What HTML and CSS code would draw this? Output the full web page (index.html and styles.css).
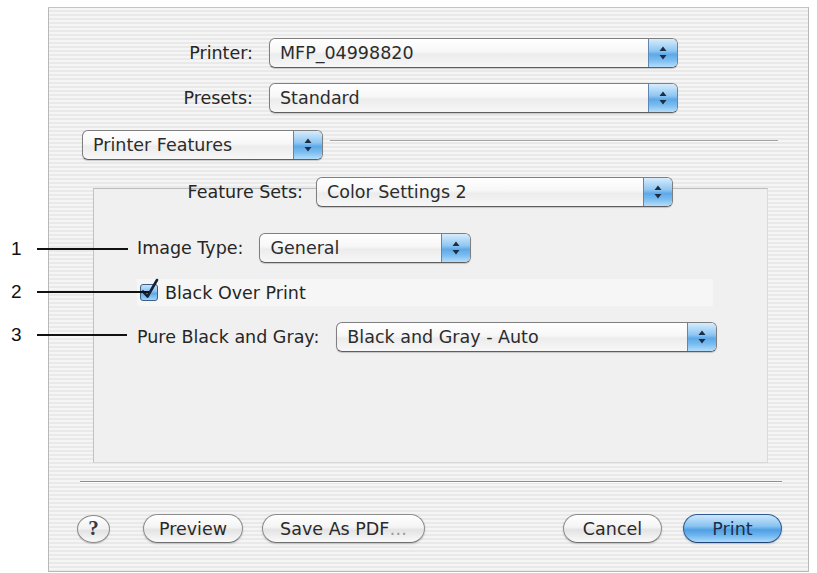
FILE: index.html
```html
<!DOCTYPE html>
<html>
<head>
<meta charset="utf-8">
<link rel="stylesheet" href="styles.css">
</head>
<body>
<div class="page">
  <div class="window">
    <div class="field-row top-row">
      <span class="label">Printer:</span>
      <div class="popup popup-printer"><span class="popup-text">MFP_04998820</span><span class="arrows"><svg width="10" height="16" viewBox="0 0 10 16"><path d="M5 1.5 L8.5 6 L1.5 6 Z M5 14.5 L8.5 10 L1.5 10 Z" fill="#1d2d44"/></svg></span></div>
    </div>
    <div class="field-row top-row second">
      <span class="label">Presets:</span>
      <div class="popup popup-printer"><span class="popup-text">Standard</span><span class="arrows"><svg width="10" height="16" viewBox="0 0 10 16"><path d="M5 1.5 L8.5 6 L1.5 6 Z M5 14.5 L8.5 10 L1.5 10 Z" fill="#1d2d44"/></svg></span></div>
    </div>
    <div class="pane-row">
      <div class="popup popup-pane"><span class="popup-text">Printer Features</span><span class="arrows"><svg width="10" height="16" viewBox="0 0 10 16"><path d="M5 1.5 L8.5 6 L1.5 6 Z M5 14.5 L8.5 10 L1.5 10 Z" fill="#1d2d44"/></svg></span></div>
      <div class="pane-line"></div>
    </div>
    <div class="field-row feature-row">
      <span class="label">Feature Sets:</span>
      <div class="popup popup-feature"><span class="popup-text">Color Settings 2</span><span class="arrows"><svg width="10" height="16" viewBox="0 0 10 16"><path d="M5 1.5 L8.5 6 L1.5 6 Z M5 14.5 L8.5 10 L1.5 10 Z" fill="#1d2d44"/></svg></span></div>
    </div>
    <div class="panel">
      <div class="panel-row">
        <span class="label">Image Type:</span>
        <div class="popup popup-image"><span class="popup-text">General</span><span class="arrows"><svg width="10" height="16" viewBox="0 0 10 16"><path d="M5 1.5 L8.5 6 L1.5 6 Z M5 14.5 L8.5 10 L1.5 10 Z" fill="#1d2d44"/></svg></span></div>
      </div>
      <div class="check-row">
        <svg class="checkbox" width="26" height="24" viewBox="0 0 26 24">
          <defs>
            <linearGradient id="cb" x1="0" y1="0" x2="0" y2="1">
              <stop offset="0" stop-color="#cfe6fa"/>
              <stop offset="0.45" stop-color="#86bff0"/>
              <stop offset="0.55" stop-color="#5ea8e6"/>
              <stop offset="1" stop-color="#a9d6f8"/>
            </linearGradient>
          </defs>
          <rect x="3.5" y="6.5" width="17" height="16" rx="2.5" fill="url(#cb)" stroke="#3d5f86"/>
          <path d="M6 13.5 L10.5 18.5 L20 2" fill="none" stroke="#14213a" stroke-width="2.6" stroke-linecap="round" stroke-linejoin="round"/>
        </svg>
        <span class="check-label">Black Over Print</span>
      </div>
      <div class="panel-row">
        <span class="label">Pure Black and Gray:</span>
        <div class="popup popup-pure"><span class="popup-text">Black and Gray - Auto</span><span class="arrows"><svg width="10" height="16" viewBox="0 0 10 16"><path d="M5 1.5 L8.5 6 L1.5 6 Z M5 14.5 L8.5 10 L1.5 10 Z" fill="#1d2d44"/></svg></span></div>
      </div>
    </div>
    <div class="separator"></div>
    <div class="button-row">
      <div class="help">?</div>
      <div class="btn btn-preview">Preview</div>
      <div class="btn btn-pdf">Save As PDF<span class="dots">…</span></div>
      <div class="spacer"></div>
      <div class="btn btn-cancel">Cancel</div>
      <div class="btn btn-print">Print</div>
    </div>
  </div>

  <div class="callout c1"><span class="num">1</span><span class="lead"></span></div>
  <div class="callout c2"><span class="num">2</span><span class="lead"></span></div>
  <div class="callout c3"><span class="num">3</span><span class="lead"></span></div>
</div>
</body>
</html>
```
FILE: styles.css
```css
html, body {
  margin: 0;
  padding: 0;
  background: #ffffff;
}

.page {
  position: relative;
  width: 817px;
  height: 573px;
  overflow: hidden;
  font-family: "DejaVu Sans", "Noto Sans", sans-serif;
  font-size: 17.5px;
  color: #242424;
}

.window {
  margin-left: 48px;
  margin-top: 7px;
  width: 761px;
  height: 565px;
  box-sizing: border-box;
  border: 1px solid #b9b9b9;
  border-top-color: #c4c4c4;
  padding-top: 30px;
  background: repeating-linear-gradient(to bottom, #f5f5f5 0px, #f5f5f5 2px, #e9e9e9 2px, #e9e9e9 4px);
}

.field-row {
  display: grid;
  align-items: center;
  column-gap: 16px;
}

.top-row {
  grid-template-columns: 204px 409px;
}

.second {
  margin-top: 15px;
}

.label {
  text-align: right;
  white-space: nowrap;
  color: #262626;
}

.popup {
  display: flex;
  align-items: stretch;
  height: 30px;
  box-sizing: border-box;
  border: 1px solid #7f7f7f;
  border-bottom-color: #5e5e5e;
  border-radius: 6px;
  background: linear-gradient(to bottom, #ffffff 0%, #f7f7f7 45%, #ececec 55%, #f7f7f7 100%);
  box-shadow: 0 1px 1px rgba(0, 0, 0, 0.18);
  overflow: hidden;
}

.popup-text {
  flex: 1;
  display: flex;
  align-items: center;
  padding-left: 10px;
  white-space: nowrap;
  color: #2c2c2c;
}

.arrows {
  width: 28px;
  display: flex;
  align-items: center;
  justify-content: center;
  border-left: 1px solid #5f86b0;
  background: linear-gradient(to bottom, #d6ecfc 0%, #8fc6f2 42%, #5ea9e8 55%, #79bbef 75%, #b5ddfa 100%);
}

.pane-row {
  display: flex;
  margin-top: 17px;
  margin-left: 33px;
  margin-right: 30px;
}

.popup-pane {
  width: 241px;
}

.pane-line {
  flex: 1;
  align-self: flex-start;
  margin-top: 10px;
  margin-left: 7px;
  border-top: 1px solid #a3a3a3;
  border-bottom: 1px solid #fbfbfb;
}

.feature-row {
  position: relative;
  z-index: 1;
  margin-top: 17px;
  grid-template-columns: 254px 357px;
  column-gap: 13px;
}

.popup-feature {
  width: 357px;
}

.panel {
  margin-top: -19px;
  margin-left: 44px;
  width: 675px;
  height: 275px;
  box-sizing: border-box;
  border: 1px solid #c9c9c9;
  border-top-color: #bdbdbd;
  border-left-color: #c2c2c2;
  border-right-color: #dadada;
  border-bottom-color: #d8d8d8;
  background: #f0f0f0;
  padding-top: 44px;
  padding-left: 43px;
}

.panel-row {
  display: flex;
  align-items: center;
}

.panel-row .label {
  text-align: left;
}

.popup-image {
  margin-left: 16px;
  width: 212px;
}

.popup-pure {
  margin-left: 17px;
  width: 381px;
}

.check-row {
  display: flex;
  align-items: center;
  margin-top: 16px;
  margin-bottom: 16px;
  height: 27px;
  width: 576px;
  background: #f6f6f6;
}

.checkbox {
  margin-top: -6px;
  margin-left: 0px;
}

.check-label {
  margin-left: 2px;
  color: #262626;
}

.separator {
  margin-top: 18px;
  margin-left: 31px;
  margin-right: 26px;
  border-top: 1px solid #8f8f8f;
  border-bottom: 1px solid #fdfdfd;
}

.button-row {
  display: flex;
  align-items: center;
  margin-top: 31px;
  margin-left: 28px;
  margin-right: 26px;
}

.help {
  width: 33px;
  height: 28px;
  box-sizing: border-box;
  border: 1px solid #8a8a8a;
  border-radius: 50%;
  background: linear-gradient(to bottom, #ffffff 0%, #f1f1f1 50%, #e2e2e2 55%, #f9f9f9 100%);
  box-shadow: 0 1px 1px rgba(0, 0, 0, 0.2);
  display: flex;
  align-items: center;
  justify-content: center;
  font-family: "Liberation Serif", "DejaVu Serif", serif;
  font-weight: bold;
  font-size: 21px;
  color: #3a3a3a;
}

.btn {
  height: 29px;
  box-sizing: border-box;
  border: 1px solid #8c8c8c;
  border-bottom-color: #6f6f6f;
  border-radius: 15px;
  background: linear-gradient(to bottom, #ffffff 0%, #f4f4f4 45%, #e3e3e3 55%, #fafafa 100%);
  box-shadow: 0 1px 2px rgba(0, 0, 0, 0.2);
  display: flex;
  align-items: center;
  justify-content: center;
  white-space: nowrap;
  color: #2a2a2a;
}

.btn-preview {
  margin-left: 33px;
  width: 100px;
}

.btn-pdf {
  margin-left: 19px;
  width: 163px;
}

.dots {
  color: #9a9a9a;
}

.spacer {
  flex: 1;
}

.btn-cancel {
  width: 99px;
}

.btn-print {
  margin-left: 21px;
  width: 99px;
  border-color: #2d5c93;
  border-bottom-color: #1f4473;
  background: linear-gradient(to bottom, #cde7fb 0%, #86c2f1 42%, #4f9fe3 55%, #6fb5ee 75%, #acdafb 100%);
  color: #1a2e4a;
}

.callout {
  position: absolute;
  left: 8px;
  display: flex;
  align-items: center;
  height: 20px;
}

.num {
  width: 26px;
  font-family: "Liberation Sans", Arial, sans-serif;
  font-size: 19px;
  color: #111111;
  padding-left: 3px;
}

.lead {
  height: 2px;
  background: #111111;
}

.c1 { top: 239px; }
.c1 .lead { width: 91px; }
.c2 { top: 282px; }
.c2 .lead { width: 112px; }
.c3 { top: 325px; }
.c3 .lead { width: 90px; }
```
